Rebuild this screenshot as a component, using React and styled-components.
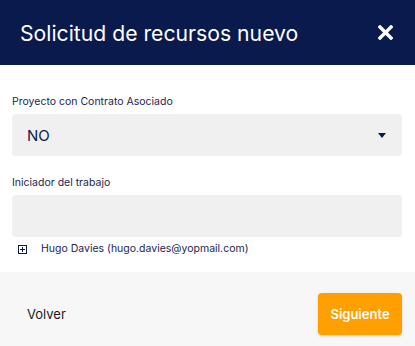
import React from "react";
import styled, { createGlobalStyle } from "styled-components";

const Global = createGlobalStyle`
  html, body { margin: 0; padding: 0; background: #ffffff; }
  body { font-family: Inter, "Noto Sans", sans-serif; }
  * { box-sizing: border-box; }
`;

const Modal = styled.div`
  width: 415px;
  height: 346px;
  display: flex;
  flex-direction: column;
  background: #ffffff;
`;

const Header = styled.header`
  height: 65px;
  flex: none;
  background: #0b1a4d;
  display: flex;
  align-items: center;
  justify-content: space-between;
  padding: 0 22px 0 20px;
`;

const Title = styled.h1`
  margin: 0;
  font-size: 21.2px;
  font-weight: 400;
  color: #ffffff;
  letter-spacing: 0;
`;

const CloseButton = styled.button`
  border: 0;
  background: none;
  padding: 0;
  width: 15px;
  height: 15px;
  display: flex;
  cursor: pointer;
`;

const Body = styled.main`
  flex: 1;
  padding: 30px 13px 0 12px;
  display: flex;
  flex-direction: column;
`;

const Field = styled.div`
  display: flex;
  flex-direction: column;
  margin-bottom: ${(p) => p.$mb || 0}px;
`;

const Label = styled.label`
  font-size: 10.5px;
  line-height: 14px;
  color: #1c2552;
  margin-bottom: 5px;
`;

const Box = styled.div`
  height: 42px;
  background: #f0f0f0;
  border-radius: 4px;
  display: flex;
  align-items: center;
  justify-content: space-between;
  padding: 0 16px 0 15px;
  font-size: 15px;
  color: #0b1a4d;
`;

const Caret = styled.span`
  width: 0;
  height: 0;
  border-left: 4px solid transparent;
  border-right: 4px solid transparent;
  border-top: 5px solid #0b1a4d;
`;

const Person = styled.div`
  display: flex;
  align-items: center;
  gap: 14px;
  padding: 5px 0 0 6px;
  font-size: 10.5px;
  line-height: 14px;
  color: #1c2552;
`;

const Footer = styled.footer`
  height: 74px;
  flex: none;
  background: #f7f7f7;
  display: flex;
  align-items: center;
  justify-content: space-between;
  padding: 21px 13px 11px 27px;
`;

const BackButton = styled.button`
  border: 0;
  background: none;
  padding: 0;
  font-family: inherit;
  font-size: 13px;
  color: #1a1a1a;
  cursor: pointer;
`;

const NextButton = styled.button`
  border: 0;
  width: 84px;
  height: 42px;
  border-radius: 4px;
  background: #ff9f00;
  color: #ffffff;
  font-family: inherit;
  font-size: 13px;
  font-weight: 600;
  box-shadow: 0 1px 3px rgba(0, 0, 0, 0.15);
  cursor: pointer;
`;

const PlusSquare = () => (
  <svg width="9" height="9" viewBox="0 0 9 9" fill="none">
    <rect x="0.5" y="0.5" width="8" height="8" stroke="#0b1a4d" strokeWidth="1" />
    <path d="M4.5 2v5M2 4.5h5" stroke="#0b1a4d" strokeWidth="1" />
  </svg>
);

export default function App() {
  return (
    <>
      <Global />
      <Modal>
        <Header>
          <Title>Solicitud de recursos nuevo</Title>
          <CloseButton aria-label="Cerrar">
            <svg width="15" height="15" viewBox="0 0 15 15">
              <path d="M2 2L13 13M13 2L2 13" stroke="#ffffff" strokeWidth="3.4" strokeLinecap="square" />
            </svg>
          </CloseButton>
        </Header>
        <Body>
          <Field $mb={20}>
            <Label>Proyecto con Contrato Asociado</Label>
            <Box>
              <span>NO</span>
              <Caret />
            </Box>
          </Field>
          <Field>
            <Label>Iniciador del trabajo</Label>
            <Box />
          </Field>
          <Person>
            <PlusSquare />
            <span>Hugo Davies (hugo.davies@yopmail.com)</span>
          </Person>
        </Body>
        <Footer>
          <BackButton>Volver</BackButton>
          <NextButton>Siguiente</NextButton>
        </Footer>
      </Modal>
    </>
  );
}
